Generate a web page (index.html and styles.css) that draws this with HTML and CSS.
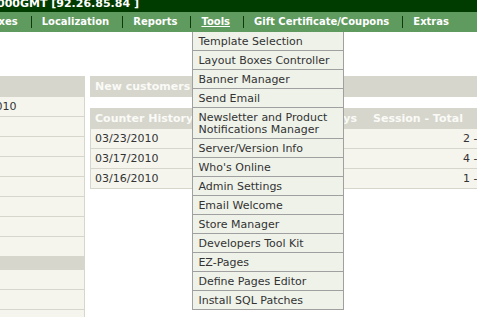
FILE: index.html
```html
<!DOCTYPE html>
<html lang="en">
<head>
    <meta charset="UTF-8">
    <title>Admin - Tools</title>
    <link rel="stylesheet" href="styles.css">
</head>
<body>

    <div class="topbar"><span>000GMT [92.26.85.84 ]</span></div>

    <nav class="navbar">
        <ul class="nav">
            <li class="nav-item">Boxes</li>
            <li class="nav-item">Localization</li>
            <li class="nav-item">Reports</li>
            <li class="nav-item active">Tools
                <ul class="dropdown">
                    <li>Template Selection</li>
                    <li>Layout Boxes Controller</li>
                    <li>Banner Manager</li>
                    <li>Send Email</li>
                    <li>Newsletter and Product Notifications Manager</li>
                    <li>Server/Version Info</li>
                    <li>Who's Online</li>
                    <li>Admin Settings</li>
                    <li>Email Welcome</li>
                    <li>Store Manager</li>
                    <li>Developers Tool Kit</li>
                    <li>EZ-Pages</li>
                    <li>Define Pages Editor</li>
                    <li>Install SQL Patches</li>
                </ul>
            </li>
            <li class="nav-item">Gift Certificate/Coupons</li>
            <li class="nav-item">Extras</li>
        </ul>
    </nav>

    <div class="content">
        <aside class="side">
            <div class="box-head"></div>
            <div class="row">03/23/2010</div>
            <div class="row"></div>
            <div class="row"></div>
            <div class="row"></div>
            <div class="row"></div>
            <div class="row"></div>
            <div class="row"></div>
            <div class="row"></div>
            <div class="box-head small"></div>
            <div class="row"></div>
            <div class="row"></div>
            <div class="row"></div>
        </aside>

        <main class="main">
            <div class="panel-head">New customers</div>

            <table class="counter">
                <thead>
                    <tr>
                        <th class="col-date">Counter History</th>
                        <th class="col-days">Days</th>
                        <th class="col-total">Session - Total</th>
                    </tr>
                </thead>
                <tbody>
                    <tr><td>03/23/2010</td><td></td><td class="total">2 - 5</td></tr>
                    <tr><td>03/17/2010</td><td></td><td class="total">4 - 9</td></tr>
                    <tr><td>03/16/2010</td><td></td><td class="total">1 - 3</td></tr>
                </tbody>
            </table>
        </main>
    </div>

</body>
</html>
```
FILE: styles.css
```css
/* --- Base --- */
:root {
    --green-dark: #003c00;
    --green-nav: #5f9a5f;
    --sep: #0b3a0b;
    --head-bg: #d6d6cd;
    --row-bg: #f5f5ee;
    --line: #d6d6cd;
    --menu-bg: #eef2e9;
    --menu-line: #a0a0a0;
}

html, body {
    margin: 0;
    padding: 0;
    overflow: hidden;
}

body {
    width: 477px;
    height: 317px;
    font-family: "DejaVu Sans", Verdana, sans-serif;
    font-size: 11px;
    color: #333;
    background: #fff;
}

/* --- Top bar --- */
.topbar {
    height: 12px;
    background: var(--green-dark);
    color: #fff;
    font-weight: bold;
    white-space: nowrap;
    overflow: hidden;
}

.topbar span {
    display: block;
    margin: -3px 0 0 -3px;
    line-height: 13px;
}

/* --- Navigation --- */
.navbar {
    position: relative;
    z-index: 10;
    height: 20px;
    background: var(--green-nav);
}

.nav {
    display: flex;
    list-style: none;
    margin: 0 0 0 -16px;
    padding: 0;
    white-space: nowrap;
}

.nav-item {
    position: relative;
    flex-shrink: 0;
    margin: 4px 0;
    padding: 0 13px 0 10px;
    border-left: 1px solid var(--sep);
    line-height: 12px;
    font-size: 10px;
    font-weight: bold;
    color: #fff;
}

.nav-item:first-child {
    border-left: 0;
    padding-left: 0;
}

.nav-item.active {
    text-decoration: underline;
}

/* --- Tools dropdown --- */
.dropdown {
    position: absolute;
    top: calc(100% + 4px);
    left: 1px;
    width: 150px;
    margin: 0;
    padding: 0;
    list-style: none;
    background: var(--menu-bg);
    border: 1px solid var(--menu-line);
    border-top: 0;
    font-size: 11px;
    font-weight: normal;
    color: #333;
    white-space: normal;
}

.dropdown li {
    padding: 4px 5px 2px;
    line-height: 12px;
    border-bottom: 1px solid var(--menu-line);
}

.dropdown li:last-child {
    border-bottom: 0;
}

/* --- Content --- */
.content {
    display: flex;
    gap: 5px;
    padding-top: 44px;
}

.side {
    flex-shrink: 0;
    width: 136px;
    margin-left: -52px;
    border-right: 1px solid var(--line);
    background: var(--row-bg);
}

.box-head {
    height: 21px;
    background: var(--head-bg);
}

.box-head.small {
    height: 13px;
}

.row {
    height: 19px;
    line-height: 19px;
    padding-left: 5px;
    border-bottom: 1px solid var(--line);
}

.main {
    flex-shrink: 0;
    width: 420px;
}

.panel-head {
    height: 21px;
    line-height: 21px;
    padding-left: 5px;
    background: var(--head-bg);
    color: #fafaf6;
    font-weight: bold;
}

/* --- Counter history table --- */
.counter {
    width: 420px;
    margin-top: 11px;
    table-layout: fixed;
    border-collapse: separate;
    border-spacing: 0;
    border-left: 1px solid var(--line);
}

.counter th {
    height: 21px;
    line-height: 21px;
    padding: 0;
    background: var(--head-bg);
    color: #fafaf6;
    font-weight: bold;
    text-align: left;
    white-space: nowrap;
}

.counter .col-date {
    width: 196px;
    padding-left: 4px;
}

.counter .col-days {
    width: 66px;
    padding-right: 6px;
    text-align: right;
}

.counter .col-total {
    padding-left: 10px;
}

.counter td {
    height: 19px;
    line-height: 19px;
    padding: 0 0 0 4px;
    background: var(--row-bg);
    border-bottom: 1px solid var(--line);
    white-space: nowrap;
}

.counter td.total {
    padding: 0 22px 0 0;
    text-align: right;
}
```
